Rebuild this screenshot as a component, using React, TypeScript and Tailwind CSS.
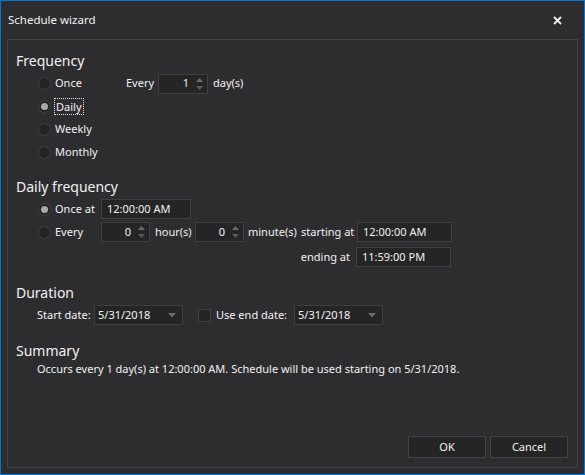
import React from "react";

const font = { fontFamily: '"Noto Sans", "Open Sans", sans-serif' };

function Radio({ checked }: { checked?: boolean }) {
    return (
        <span className="w-[13px] h-[13px] rounded-full bg-[#242426] border border-[#414144] flex items-center justify-center shrink-0">
            {checked && <span className="w-[7px] h-[7px] rounded-full bg-[#a8a8a8]" />}
        </span>
    );
}

function Arrows() {
    return (
        <svg width="9" height="16" viewBox="0 0 9 16" className="shrink-0">
            <path d="M1 6 L4.5 2 L8 6 Z" fill="#6b6b6b" />
            <path d="M1 10 L4.5 14 L8 10 Z" fill="#5a5a5a" />
        </svg>
    );
}

function Spinner({ value, width }: { value: string; width: string }) {
    return (
        <div className={`${width} h-[20px] bg-[#252526] border border-[#3f3f42] flex items-center justify-end pr-[3px] gap-[6px] shrink-0`}>
            <span className="text-[11px] text-[#f1f1f1]">{value}</span>
            <Arrows />
        </div>
    );
}

function TextBox({ value, width }: { value: string; width: string }) {
    return (
        <div className={`${width} h-[20px] bg-[#252526] border border-[#3f3f42] flex items-center px-[5px] text-[11px] text-[#f1f1f1] shrink-0`}>
            {value}
        </div>
    );
}

function Combo({ value }: { value: string }) {
    return (
        <div className="w-[89px] h-[20px] bg-[#252526] border border-[#3f3f42] flex items-center justify-between pl-[3px] pr-[6px] text-[11px] text-[#f1f1f1] shrink-0">
            <span>{value}</span>
            <svg width="8" height="5" viewBox="0 0 8 5">
                <path d="M0 0 L8 0 L4 4.5 Z" fill="#6b6b6b" />
            </svg>
        </div>
    );
}

function Heading({ children, className }: { children: React.ReactNode; className?: string }) {
    return (
        <div className={`h-[20px] flex items-center text-[14px] text-[#f1f1f1] ${className ?? ""}`}>
            {children}
        </div>
    );
}

export default function App() {
    return (
        <div style={font} className="w-[585px] h-[475px] bg-[#2d2d30] border border-[#0078d7] flex flex-col text-[#f1f1f1] text-[11px] whitespace-nowrap">
            <div className="h-[38px] flex items-center justify-between pl-[7px] pr-[22px]">
                <span className="text-[11.5px]">Schedule wizard</span>
                <svg width="9" height="9" viewBox="0 0 9 9">
                    <path d="M1 1 L8 8 M8 1 L1 8" stroke="#f1f1f1" strokeWidth="1.8" />
                </svg>
            </div>

            <div className="mx-[6px] mb-[6px] flex-1 border border-[#434346] flex flex-col pl-[8px] pt-[10px] pr-[9px] pb-[9px]">
                <Heading>Frequency</Heading>
                <div className="flex mt-[2px]">
                    <div className="flex flex-col w-[110px] pl-[22px]">
                        <div className="h-[23px] flex items-center gap-[4px]">
                            <Radio />
                            <span>Once</span>
                        </div>
                        <div className="h-[23px] flex items-center gap-[3px]">
                            <Radio checked />
                            <span className="border border-dotted border-[#e0e0e0] px-px leading-[15px]">Daily</span>
                        </div>
                        <div className="h-[23px] flex items-center gap-[4px]">
                            <Radio />
                            <span>Weekly</span>
                        </div>
                        <div className="h-[23px] flex items-center gap-[4px]">
                            <Radio />
                            <span>Monthly</span>
                        </div>
                    </div>
                    <div className="h-[23px] flex items-center">
                        <span className="w-[32px]">Every</span>
                        <Spinner value="1" width="w-[50px]" />
                        <span className="ml-[5px]">day(s)</span>
                    </div>
                </div>

                <Heading className="mt-[12px]">Daily frequency</Heading>
                <div className="flex flex-col pl-[22px] mt-[2px]">
                    <div className="h-[22px] flex items-center">
                        <div className="w-[63px] flex items-center gap-[4px]">
                            <Radio checked />
                            <span>Once at</span>
                        </div>
                        <TextBox value="12:00:00 AM" width="w-[90px]" />
                    </div>
                    <div className="h-[22px] mt-px flex items-center">
                        <div className="w-[63px] flex items-center gap-[4px]">
                            <Radio />
                            <span>Every</span>
                        </div>
                        <Spinner value="0" width="w-[49px]" />
                        <span className="w-[45px] pl-[5px]">hour(s)</span>
                        <Spinner value="0" width="w-[49px]" />
                        <span className="w-[57px] pl-[4px]">minute(s)</span>
                        <span className="w-[56px]">starting at</span>
                        <TextBox value="12:00:00 AM" width="w-[95px]" />
                    </div>
                    <div className="h-[22px] mt-[3px] flex items-center">
                        <span className="ml-[262px] w-[56px] text-right pr-[6px]">ending at</span>
                        <TextBox value="11:59:00 PM" width="w-[95px]" />
                    </div>
                </div>

                <Heading className="mt-[14px]">Duration</Heading>
                <div className="h-[22px] mt-[2px] flex items-center pl-[21px]">
                    <span className="w-[57px]">Start date:</span>
                    <Combo value="5/31/2018" />
                    <span className="ml-[15px] w-[13px] h-[13px] bg-[#252526] border border-[#3f3f42] shrink-0" />
                    <span className="ml-[5px] w-[78px]">Use end date:</span>
                    <Combo value="5/31/2018" />
                </div>

                <Heading className="mt-[14px]">Summary</Heading>
                <div className="h-[16px] mt-px flex items-center pl-[21px]">
                    Occurs every 1 day(s) at 12:00:00 AM. Schedule will be used starting on 5/31/2018.
                </div>

                <div className="mt-auto flex justify-end gap-[4px]">
                    <button className="w-[78px] h-[22px] bg-[#252526] border border-[#434346] text-[11px] text-[#f1f1f1]">OK</button>
                    <button className="w-[78px] h-[22px] bg-[#252526] border border-[#434346] text-[11px] text-[#f1f1f1]">Cancel</button>
                </div>
            </div>
        </div>
    );
}
